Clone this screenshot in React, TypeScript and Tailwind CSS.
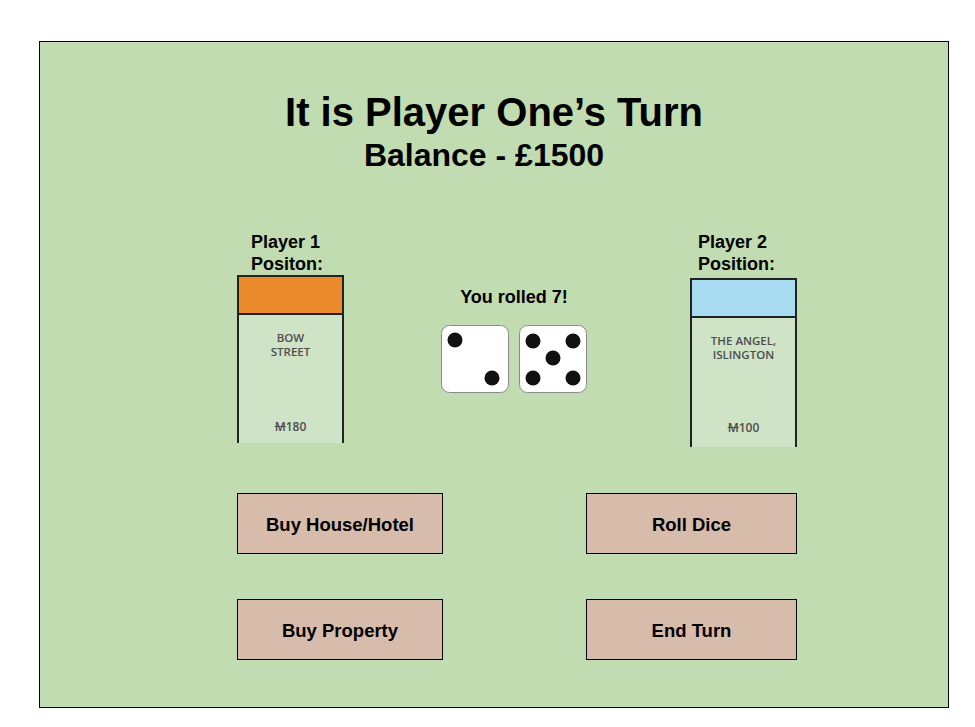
import React from "react";

type Pip = { x: number; y: number };

const dieOne: Pip[] = [
  { x: 14, y: 15 },
  { x: 51, y: 53 },
];

const dieTwo: Pip[] = [
  { x: 14, y: 16 },
  { x: 54, y: 16 },
  { x: 34, y: 33 },
  { x: 14, y: 53 },
  { x: 54, y: 53 },
];

function Die({ pips }: { pips: Pip[] }) {
  return (
    <svg width="68" height="68" viewBox="0 0 68 68">
      <rect x="0.5" y="0.5" width="67" height="67" rx="8" fill="#fff" stroke="#8a8a8a" strokeWidth="1" />
      {pips.map((p, i) => (
        <circle key={i} cx={p.x} cy={p.y} r="7.5" fill="#111" />
      ))}
    </svg>
  );
}

function PropertyCard({
  band,
  name,
  price,
  height,
  bottom,
}: {
  band: string;
  name: string[];
  price: string;
  height: string;
  bottom: string;
}) {
  return (
    <div className={`w-[107px] ${height} flex flex-col border-x-2 border-t-2 border-[#222] bg-[#cfe3c7]`}>
      <div className={`h-[38px] border-b-2 border-[#222] ${band}`} />
      <div
        className={`flex flex-1 flex-col items-center pt-[16px] ${bottom} font-['Open_Sans',sans-serif] text-[11.5px] font-semibold leading-[14px] text-[#4d4d4d]`}
      >
        {name.map((n) => (
          <span key={n}>{n}</span>
        ))}
        <span className="mt-auto text-[12px]">
          <span className="line-through">M</span>
          {price}
        </span>
      </div>
    </div>
  );
}

function ActionButton({ label, width }: { label: string; width: string }) {
  return (
    <button
      className={`${width} h-[61px] border border-black bg-[#d7bbab] pt-[3px] text-[18.5px] font-bold text-black`}
    >
      {label}
    </button>
  );
}

export default function App() {
  return (
    <div className="h-[727px] w-[975px] bg-white pl-[39px] pt-[41px] font-['Liberation_Sans',Arial,sans-serif] text-black">
      <div className="flex h-[667px] w-[910px] flex-col border border-black bg-[#c0dcb0]">
        {/* Heading */}
        <div className="flex flex-col items-center pt-[48px] font-bold">
          <h1 className="text-[40px] leading-[44px]">It is Player One’s Turn</h1>
          <h2 className="mr-[20px] mt-[4px] text-[32px] leading-[34px]">Balance - £1500</h2>
        </div>

        {/* Positions and dice */}
        <div className="mt-[59px] flex pl-[197px]">
          <div className="flex w-[107px] flex-col">
            <div className="pl-[14px] text-[18px] font-bold leading-[22px]">
              <div>Player 1</div>
              <div>Positon:</div>
            </div>
            <PropertyCard
              band="bg-[#ec8b2e]"
              name={["BOW", "STREET"]}
              price="180"
              height="h-[168px]"
              bottom="pb-[9px]"
            />
          </div>

          <div className="flex w-[340px] flex-col items-center pt-[55px]">
            <div className="text-[18px] font-bold leading-[22px]">You rolled 7!</div>
            <div className="mt-[17px] flex gap-[10px]">
              <Die pips={dieOne} />
              <Die pips={dieTwo} />
            </div>
          </div>

          <div className="ml-[6px] flex w-[107px] flex-col">
            <div className="pl-[8px] text-[18px] font-bold leading-[22px]">
              <div>Player 2</div>
              <div>Position:</div>
            </div>
            <div className="mt-[3px]">
              <PropertyCard
                band="bg-[#a8daf0]"
                name={["THE ANGEL,", "ISLINGTON"]}
                price="100"
                height="h-[169px]"
                bottom="pb-[12px]"
              />
            </div>
          </div>
        </div>

        {/* Actions */}
        <div className="mt-[46px] grid grid-cols-[206px_211px] gap-x-[143px] gap-y-[45px] pl-[197px]">
          <ActionButton label="Buy House/Hotel" width="w-[206px]" />
          <ActionButton label="Roll Dice" width="w-[211px]" />
          <ActionButton label="Buy Property" width="w-[206px]" />
          <ActionButton label="End Turn" width="w-[211px]" />
        </div>
      </div>
    </div>
  );
}
